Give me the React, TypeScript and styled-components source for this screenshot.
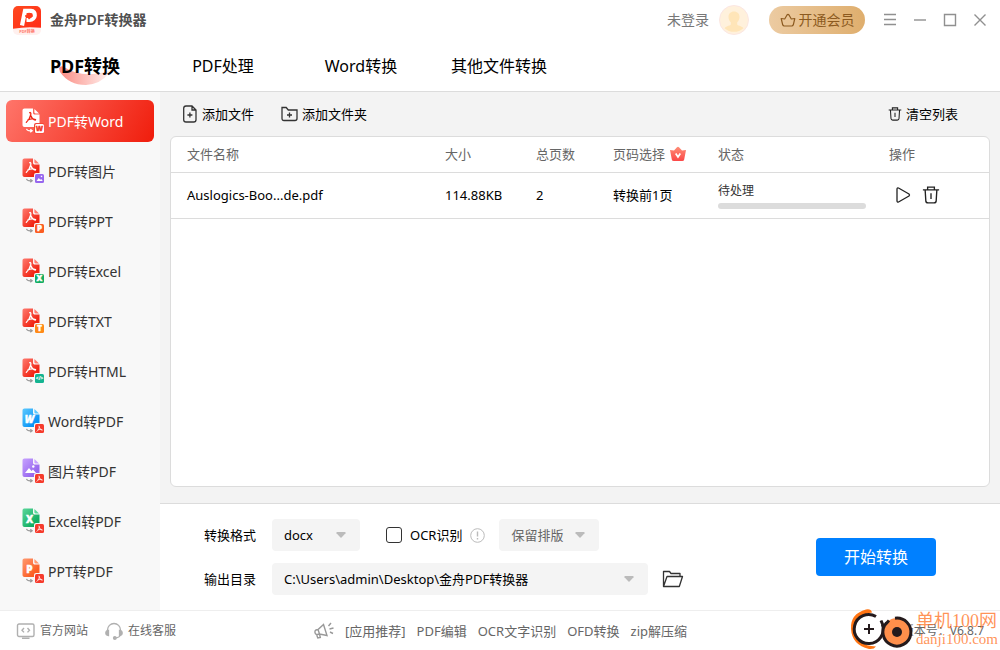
import React from 'react';
import styled, { createGlobalStyle, css } from 'styled-components';

const GlobalStyle = createGlobalStyle`
  *, *::before, *::after { box-sizing: border-box; }
  body {
    margin: 0;
    background: #fff;
    color: #000;
    font: 13px/20px 'Noto Sans', 'Noto Sans CJK SC', sans-serif;
  }
  button, select, input { font: inherit; color: inherit; }
  button { border: 0; padding: 0; background: none; cursor: pointer; }
  a { color: inherit; text-decoration: none; }
  svg { display: block; flex: none; }
`;

const Shell = styled.div`
  display: flex;
  flex-direction: column;
  min-height: 100vh;
`;

/* ---------- title bar ---------- */

const TitleBar = styled.header`
  display: flex;
  align-items: center;
  height: 40px;
  padding: 0 12px;
`;

const AppName = styled.h1`
  margin: 0 auto 0 8px;
  font-size: 14px;
  font-weight: 600;
  color: #505050;
`;

const LoginLink = styled.a`
  display: flex;
  align-items: center;
  gap: 10px;
  font-size: 14px;
  color: #777;
`;

const VipButton = styled.button`
  display: flex;
  align-items: center;
  justify-content: center;
  gap: 3px;
  width: 96px;
  height: 28px;
  margin: 0 17px 0 20px;
  border-radius: 14px;
  font-size: 14px;
  color: #8c5a20;
  background: linear-gradient(90deg, #eccba2, #dfae6d);
`;

const WindowControls = styled.div`
  display: flex;
  gap: 14px;
`;

const WindowButton = styled.button`
  width: 16px;
  height: 16px;
  color: #909090;
`;

/* ---------- tabs ---------- */

const Tabs = styled.nav`
  display: flex;
  height: 52px;
  padding: 0 16px;
  border-bottom: 1px solid #dcdcdc;
`;

const Tab = styled.button<{ $active?: boolean }>`
  position: relative;
  width: 138px;
  font-size: ${p => (p.$active ? 18 : 16)}px;
  font-weight: ${p => (p.$active ? 700 : 400)};
`;

const TabLabel = styled.span`
  position: relative;
`;

const Swoosh = styled.svg`
  position: absolute;
  left: 43px;
  top: 26px;
`;

/* ---------- body ---------- */

const Body = styled.div`
  display: flex;
  flex: 1;
`;

const Sidebar = styled.nav`
  display: flex;
  flex-direction: column;
  gap: 8px;
  width: 160px;
  padding: 8px 6px;
  background: #f8f8f8;
`;

const SideItem = styled.button<{ $active?: boolean }>`
  display: flex;
  align-items: center;
  gap: 4px;
  height: 42px;
  padding: 0 16px;
  border-radius: 6px;
  font-size: 14px;
  color: #333;
  ${p => p.$active && css`
    color: #fff;
    background: linear-gradient(120deg, #ff756a, #f01d0c);
  `}
`;

const SideLabel = styled.span`
  padding-top: 2px;
`;

const Main = styled.main`
  display: flex;
  flex: 1;
  flex-direction: column;
  min-width: 0;
`;

const FilePane = styled.section`
  display: flex;
  flex: 1;
  flex-direction: column;
  padding: 0 10px 16px;
  background: #f3f3f3;
  border-bottom: 1px solid #dcdcdc;
`;

const Toolbar = styled.div`
  display: flex;
  align-items: center;
  gap: 27px;
  height: 44px;
  padding: 0 32px 0 12px;
`;

const ToolButton = styled.button<{ $end?: boolean }>`
  display: flex;
  align-items: center;
  gap: 4px;
  margin-left: ${p => (p.$end ? 'auto' : '0')};
`;

const Card = styled.div`
  flex: 1;
  background: #fff;
  border: 1px solid #dcdcdc;
  border-radius: 6px;
`;

const FileTable = styled.table`
  width: 100%;
  table-layout: fixed;
  border-collapse: collapse;
`;

const HeadCell = styled.th<{ $width?: number }>`
  width: ${p => (p.$width ? `${p.$width}px` : 'auto')};
  height: 35px;
  padding: 0 0 0 16px;
  border-bottom: 1px solid #dcdcdc;
  font-weight: 400;
  text-align: left;
  color: #666;
`;

const Cell = styled.td`
  height: 46px;
  padding: 0 0 0 16px;
  border-bottom: 1px solid #dcdcdc;
`;

const WithIcon = styled.span`
  display: flex;
  align-items: center;
  gap: 4px;
`;

const Status = styled.div`
  font-size: 12px;
  line-height: 18px;
  color: #333;
`;

const Track = styled.div`
  width: 148px;
  height: 6px;
  margin-top: 3px;
  border-radius: 3px;
  background: #dcdcdc;
`;

const RowActions = styled.div`
  display: flex;
  align-items: center;
  gap: 11px;
  padding-left: 6px;
`;

/* ---------- settings ---------- */

const Settings = styled.section`
  display: flex;
  align-items: center;
  justify-content: space-between;
  height: 106px;
  padding: 0 64px 0 44px;
`;

const Fields = styled.div`
  display: flex;
  flex-direction: column;
  gap: 12px;
`;

const FieldRow = styled.div`
  display: flex;
  align-items: center;
  height: 32px;
`;

const FieldLabel = styled.label`
  width: 68px;
`;

const SelectBox = styled.div<{ $width: number; $muted?: boolean }>`
  display: grid;
  align-items: center;
  width: ${p => p.$width}px;
  height: 32px;
  border-radius: 4px;
  background: #f4f4f4;
  color: ${p => (p.$muted ? '#666' : '#000')};
  > * { grid-area: 1 / 1; }
  > svg { justify-self: end; margin-right: 14px; pointer-events: none; }
`;

const Select = styled.select`
  width: 100%;
  height: 32px;
  padding: 0 30px 0 12px;
  border: 0;
  background: none;
  appearance: none;
`;

const OcrLabel = styled.label`
  display: flex;
  align-items: center;
  gap: 8px;
  margin: 0 8px 0 26px;
`;

const Checkbox = styled.input`
  width: 16px;
  height: 16px;
  margin: 0;
  border: 1px solid #333;
  border-radius: 3px;
  background: #fff;
  appearance: none;
`;

const InfoButton = styled.button`
  margin-right: 14px;
`;

const FolderButton = styled.button`
  margin-left: 14px;
`;

const StartButton = styled.button`
  width: 120px;
  height: 38px;
  border-radius: 4px;
  font-size: 16px;
  color: #fff;
  background: #0080ff;
`;

/* ---------- footer ---------- */

const Footer = styled.footer`
  position: relative;
  display: flex;
  align-items: center;
  height: 40px;
  padding: 0 16px;
  border-top: 1px solid #eee;
  font-size: 12px;
  color: #666;
`;

const FooterLinks = styled.div`
  display: flex;
  align-items: center;
  gap: 17px;
`;

const FooterLink = styled.a`
  display: flex;
  align-items: center;
  gap: 5px;
`;

const Promo = styled.div`
  display: flex;
  align-items: center;
  gap: 11px;
  margin: 0 auto 0 138px;
  font-size: 13px;
`;

const SiteMark = styled.div`
  position: absolute;
  right: 2px;
  bottom: 0;
  display: flex;
  align-items: center;
  gap: 2px;
`;

const SiteMarkText = styled.div`
  font: 15px/15px 'Liberation Serif', 'Noto Sans CJK SC', serif;
  color: rgba(255, 112, 32, 0.75);
`;

const SiteMarkName = styled.div`
  font-size: 18px;
  line-height: 21px;
`;

/* ---------- icons ---------- */

const Acrobat = () => (
  <path
    d="M7.600 4.700c1.100-.7 1.500.600 1.100 2.200-.6 2.800-2 5.200-4.400 7.500M8.400 7c.8 2.400 2.200 4.200 4.900 5.200M6 11.800c2.200-1 4.800-1.300 7.600-.3"
    fill="none"
    stroke="currentColor"
    strokeWidth="1.300"
    strokeLinecap="round"
    strokeLinejoin="round"
  />
);

type Kind = 'pdf' | 'word' | 'image' | 'ppt' | 'excel' | 'txt' | 'html';

const docTones: Record<Kind, [string, string]> = {
  pdf: ['#ff7b70', '#f02413'],
  word: ['#5cc9ff', '#0a94f5'],
  image: ['#c7a2ff', '#9767ee'],
  ppt: ['#ff9a72', '#fb5d22'],
  excel: ['#5bd79b', '#12ad62'],
  txt: ['#ffb04a', '#ff8a17'],
  html: ['#3ed3b4', '#14b491'],
};

const letters: Partial<Record<Kind, string>> = { word: 'W', ppt: 'P', excel: 'X', txt: 'T', html: '</>' };

const ConvertIcon = ({ from, to, active }: { from: Kind; to: Kind; active?: boolean }) => {
  const id = `doc-${from}-${to}`;
  const badgeInk = active ? '#f23a2a' : '#fff';
  return (
    <svg width="22" height="26" viewBox="0 0 22 26" aria-hidden="true">
      <defs>
        <linearGradient id={id} x1="0" y1="0" x2="1" y2="1">
          <stop offset="0" stopColor={active ? '#fff' : docTones[from][0]} />
          <stop offset=".75" stopColor={active ? '#fff' : docTones[from][1]} />
        </linearGradient>
      </defs>
      <path d="M2.500.5H11v4.200c0 1 .8 1.800 1.800 1.800h4.700V17c0 1.200-.9 2-2 2h-13c-1.200 0-2-.8-2-2V2.500c0-1.200.8-2 2-2z" fill={`url(#${id})`} />
      <path d="M12.400.9l4.700 4.500h-3.500c-.7 0-1.200-.5-1.200-1.200z" fill={active ? '#fff' : docTones[from][0]} />
      <g color={active ? '#f02413' : '#fff'}>
        {from === 'pdf' && <Acrobat />}
        {from === 'image' && <><path d="M3 15l4-5 2.500 3 1.500-1.500 3 3.500z" fill="#fff" /><circle cx="11.300" cy="8.500" r="1.200" fill="#fff" /></>}
        {letters[from] && (
          <text x="7.500" y="15" textAnchor="middle" fontFamily="Open Sans" fontWeight="800" fontStyle={from === 'word' ? 'italic' : 'normal'} fontSize="10" fill="#fff" stroke="#fff" strokeWidth=".4">{letters[from]}</text>
        )}
      </g>
      <path d="M4.500 20.800c.4 1.700 2 2.200 4.800 2M8.300 21.200l2 1.600-2 1.400" fill="none" stroke={active ? '#fff' : '#999'} strokeWidth="1.100" />
      <rect x="12" y="15" width="10.500" height="10.500" rx="2" fill={active ? '#f54435' : '#f8f8f8'} />
      <rect x="13" y="16" width="9" height="9" rx="1.500" fill={active ? '#fff' : to === 'pdf' ? '#f63b2c' : docTones[to][1]} />
      {to === 'pdf' && <g color="#fff" transform="translate(12.500 15.300) scale(.56)"><Acrobat /></g>}
      {to === 'image' && <><path d="M14.500 23l2.300-3 1.500 1.700.9-.8 1.600 2.100z" fill="#fff" /><rect x="18.800" y="17.700" width="1.400" height="1.400" fill="#fff" /></>}
      {letters[to] && (
        <text x="17.500" y={to === 'html' ? 22.300 : 23.300} textAnchor="middle" fontFamily="Open Sans" fontWeight="800" fontSize={to === 'html' ? 5 : to === 'word' ? 7 : 8} fill={badgeInk} stroke={badgeInk} strokeWidth={to === 'html' ? 0 : 0.400}>{letters[to]}</text>
      )}
    </svg>
  );
};

const Logo = () => (
  <svg width="30" height="30" viewBox="0 0 30 30" aria-hidden="true">
    <defs>
      <linearGradient id="logo" x1="0" y1="0" x2="1" y2="1">
        <stop offset="0" stopColor="#ff4a20" /><stop offset="1" stopColor="#ff2b16" />
      </linearGradient>
      <clipPath id="logo-clip"><rect x="1" y="1" width="28" height="29" rx="5" /></clipPath>
    </defs>
    <g clipPath="url(#logo-clip)">
      <rect width="30" height="30" fill="#fff0ee" />
      <path d="M0 0h30v23Q15 21 0 24z" fill="url(#logo)" />
    </g>
    <path d="M10 20.500L13 5.800H19c5.500 0 5 9.200-1.500 9.200h-3" fill="none" stroke="#fff" strokeWidth="4.200" />
    <path d="M13 11h6.500M16.500 8l3.500 3-3.500 3" fill="none" stroke="#ff3b1d" strokeWidth="1.600" />
    <text x="15" y="28" textAnchor="middle" fontSize="4" fontWeight="700" fill="#ff7a6c">PDF转换</text>
  </svg>
);

const Avatar = () => (
  <svg width="30" height="30" viewBox="0 0 30 30" aria-hidden="true">
    <circle cx="15" cy="15" r="14.500" fill="#fff1dc" stroke="#fbe6e2" />
    <path d="M15 6.500c3.300 0 5.500 2.300 5.500 5.500 0 2.200-.9 4-2.300 5.200v2.300c0 1 4.300 1.200 6.200 3.700a14 14 0 01-18.800 0c1.900-2.500 6.200-2.700 6.200-3.700v-2.300C10.400 16 9.500 14.200 9.500 12c0-3.200 2.200-5.500 5.500-5.500z" fill="#ffe5b8" />
  </svg>
);

const Crown = () => (
  <svg width="16" height="14" viewBox="0 0 16 14" fill="none" stroke="currentColor" strokeWidth="1.200" strokeLinejoin="round" aria-hidden="true">
    <path d="M1.200 5.500l3.500.5 2.300-4q1-1.200 2 0l2.300 4 3.500-.5-1.500 6.300q-.4 1.200-1.600 1.200H4.300q-1.200 0-1.600-1.200z" />
  </svg>
);

const VipBadge = () => (
  <svg width="18" height="16" viewBox="0 0 18 16" aria-hidden="true">
    <defs><linearGradient id="vip" x1="0" y1="0" x2="0" y2="1"><stop offset="0" stopColor="#ff8d76" /><stop offset="1" stopColor="#fb4848" /></linearGradient></defs>
    <path d="M1 4l4 .5 3-3.300q1-.8 2 0l3 3.300 4-.5-1.800 9.500q-.2 1.500-2 1.500H4.800q-1.800 0-2-1.500z" fill="url(#vip)" />
    <path d="M6.700 7.500L9 11l2.300-3.500" fill="none" stroke="#fff" strokeWidth="1.700" />
  </svg>
);

const FileAdd = () => (
  <svg width="16" height="18" viewBox="0 0 16 18" fill="none" stroke="#333" strokeWidth="1.300" aria-hidden="true">
    <path d="M10 1H4Q1.700 1 1.700 3.300v11.400Q1.700 17 4 17h7.700q2.300 0 2.300-2.300V5zM10 1v4h4M7.900 7.500v5M5.400 10h5" />
  </svg>
);

const FolderAdd = () => (
  <svg width="17" height="16" viewBox="0 0 17 16" fill="none" stroke="#333" strokeWidth="1.300" aria-hidden="true">
    <path d="M1 1.500h4.200L7.300 4H16v8.500q0 2-2 2H3q-2 0-2-2zM8.500 6.500v5M6 9h5" />
  </svg>
);

const Trash = ({ size }: { size: number }) => (
  <svg width={size} height={size} viewBox="0 0 16 16" fill="none" stroke="#222" strokeWidth="1.200" aria-hidden="true">
    <path d="M.8 3.500h14.400M5 3.300V1h6v2.300M2.800 3.500l.6 9.700q.1 1.800 2 1.800h5.200q1.900 0 2-1.800l.6-9.700M8 6.500v5" />
  </svg>
);

const Play = () => (
  <svg width="16" height="18" viewBox="0 0 16 18" fill="none" stroke="#222" strokeWidth="1.300" strokeLinejoin="round" aria-hidden="true">
    <path d="M2 3v12q.2 1.500 1.500 1L14 10q1-1 0-2L3.500 2Q2.200 1.500 2 3z" />
  </svg>
);

const Caret = () => (
  <svg width="10" height="6" viewBox="0 0 10 6" aria-hidden="true"><path d="M1 0h8q1 .5.500 1.300L5.500 5.500q-.5.400-1 0L.5 1.300Q0 .5 1 0z" fill="#bbb" /></svg>
);

const Info = () => (
  <svg width="15" height="15" viewBox="0 0 15 15" fill="none" stroke="#bbb" aria-hidden="true">
    <circle cx="7.500" cy="7.500" r="6.800" /><path d="M7.500 3.500v5M7.500 10v1.500" strokeWidth="1.400" />
  </svg>
);

const OpenFolder = () => (
  <svg width="22" height="18" viewBox="0 0 22 18" fill="none" stroke="#333" strokeWidth="1.300" strokeLinejoin="round" aria-hidden="true">
    <path d="M1.500 16.500V1.500h6l1.500 2h9V6M1.500 16.500L5 6.500h15.500l-3.200 10z" />
  </svg>
);

const Monitor = () => (
  <svg width="19" height="16" viewBox="0 0 19 16" fill="none" stroke="#b0b0b0" strokeWidth="1.400" aria-hidden="true">
    <rect x="1.500" y="1" width="16.500" height="12.500" rx="1.500" /><path d="M6 15.300h7.500M8 5L6 7.200l2 2.200M11.500 5l2 2.200-2 2.200" />
  </svg>
);

const Headset = () => (
  <svg width="18" height="18" viewBox="0 0 18 18" fill="none" stroke="#b0b0b0" strokeWidth="1.300" aria-hidden="true">
    <path d="M2.500 9V8a6.500 6.500 0 0113 0v1M15.500 12.500q-.5 3-5 3.500" />
    <path d="M3.500 8.500v5q-2.700-.3-2.700-2.500t2.700-2.500zM14.500 8.500v5q2.700-.3 2.700-2.500t-2.700-2.500z" fill="#b0b0b0" />
    <circle cx="9.800" cy="16" r="1.300" fill="#b0b0b0" />
  </svg>
);

const Megaphone = () => (
  <svg width="20" height="17" viewBox="0 0 20 17" fill="none" stroke="#999" strokeWidth="1.400" aria-hidden="true">
    <path d="M1 9q-.5 3.500 2.500 3.500l2-.5 7.500 1.500L9.500 2.500 4 7.500 2 8zM5.500 12l.8 3.500-2.500.5-1.300-3.500M4 7.500l1.500 4.500M14.500 4L17 1M15.500 7l4-1M16 10l3 1.500" />
  </svg>
);

const SiteLogo = () => (
  <svg width="64" height="42" viewBox="0 0 64 42" fill="none" aria-hidden="true">
    <path d="M16 1.500Q0 6 1 21q1 16 18 20 5 .5 7-2.500Q6 38 5 21 5 7 22 4.500q-1-4-6-3z" fill="#ff7412" />
    <circle cx="19" cy="21" r="14.500" fill="#fff" />
    <path d="M26 8.500a14.500 14.500 0 106.500 8" stroke="#241a1c" strokeWidth="3" />
    <path d="M19 16v10M14 21h10" stroke="#241a1c" strokeWidth="2" />
    <circle cx="47" cy="24" r="14" fill="#ff8f4b" />
    <path d="M45 10.200a14 14 0 11-8.500 4.500M31 12.500l2.500 6 5.500-6" stroke="#241a1c" strokeWidth="3" />
    <circle cx="47" cy="24" r="5" fill="#241a1c" />
  </svg>
);

const ControlIcon = ({ d }: { d: string }) => (
  <svg width="16" height="16" viewBox="0 0 16 16" fill="none" stroke="currentColor" strokeWidth="1.400" aria-hidden="true"><path d={d} /></svg>
);

/* ---------- data ---------- */

const controls = [
  { label: '菜单', d: 'M2 2.500h12M2 7.500h12M2 12.500h12' },
  { label: '最小化', d: 'M2 8h12' },
  { label: '最大化', d: 'M2.500 2.500h11v11h-11z' },
  { label: '关闭', d: 'M2.500 2.500l11 11M13.500 2.500l-11 11' },
];

const tabs = ['PDF转换', 'PDF处理', 'Word转换', '其他文件转换'];

const converters: { label: string; from: Kind; to: Kind }[] = [
  { label: 'PDF转Word', from: 'pdf', to: 'word' },
  { label: 'PDF转图片', from: 'pdf', to: 'image' },
  { label: 'PDF转PPT', from: 'pdf', to: 'ppt' },
  { label: 'PDF转Excel', from: 'pdf', to: 'excel' },
  { label: 'PDF转TXT', from: 'pdf', to: 'txt' },
  { label: 'PDF转HTML', from: 'pdf', to: 'html' },
  { label: 'Word转PDF', from: 'word', to: 'pdf' },
  { label: '图片转PDF', from: 'image', to: 'pdf' },
  { label: 'Excel转PDF', from: 'excel', to: 'pdf' },
  { label: 'PPT转PDF', from: 'ppt', to: 'pdf' },
];

const promos = ['[应用推荐]', 'PDF编辑', 'OCR文字识别', 'OFD转换', 'zip解压缩'];

export default function App() {
  return (
    <Shell>
      <GlobalStyle />
      <TitleBar>
        <Logo />
        <AppName>金舟PDF转换器</AppName>
        <LoginLink href="#login">未登录<Avatar /></LoginLink>
        <VipButton><Crown />开通会员</VipButton>
        <WindowControls>
          {controls.map(c => (
            <WindowButton key={c.label} aria-label={c.label}><ControlIcon d={c.d} /></WindowButton>
          ))}
        </WindowControls>
      </TitleBar>

      <Tabs>
        {tabs.map((label, i) => (
          <Tab key={label} $active={i === 0}>
            {i === 0 && (
              <Swoosh width="52" height="20" viewBox="0 0 52 20" aria-hidden="true">
                <defs><linearGradient id="swoosh"><stop offset="0" stopColor="#fb8b82" /><stop offset="1" stopColor="#fff0ee" /></linearGradient></defs>
                <path d="M0 2q2-3 5-1 18 12 44 4 2 0 1 2-8 11-23 12Q10 19 1 6z" fill="url(#swoosh)" />
              </Swoosh>
            )}
            <TabLabel>{label}</TabLabel>
          </Tab>
        ))}
      </Tabs>

      <Body>
        <Sidebar>
          {converters.map((c, i) => (
            <SideItem key={c.label} $active={i === 0}>
              <ConvertIcon from={c.from} to={c.to} active={i === 0} />
              <SideLabel>{c.label}</SideLabel>
            </SideItem>
          ))}
        </Sidebar>

        <Main>
          <FilePane>
            <Toolbar>
              <ToolButton><FileAdd />添加文件</ToolButton>
              <ToolButton><FolderAdd />添加文件夹</ToolButton>
              <ToolButton $end><Trash size={14} />清空列表</ToolButton>
            </Toolbar>
            <Card>
              <FileTable>
                <thead>
                  <tr>
                    <HeadCell>文件名称</HeadCell>
                    <HeadCell $width={91}>大小</HeadCell>
                    <HeadCell $width={77}>总页数</HeadCell>
                    <HeadCell $width={105}><WithIcon>页码选择<VipBadge /></WithIcon></HeadCell>
                    <HeadCell $width={171}>状态</HeadCell>
                    <HeadCell $width={116}>操作</HeadCell>
                  </tr>
                </thead>
                <tbody>
                  <tr>
                    <Cell>Auslogics-Boo...de.pdf</Cell>
                    <Cell>114.88KB</Cell>
                    <Cell>2</Cell>
                    <Cell>转换前1页</Cell>
                    <Cell><Status>待处理</Status><Track /></Cell>
                    <Cell>
                      <RowActions>
                        <button aria-label="开始"><Play /></button>
                        <button aria-label="删除"><Trash size={18} /></button>
                      </RowActions>
                    </Cell>
                  </tr>
                </tbody>
              </FileTable>
            </Card>
          </FilePane>

          <Settings>
            <Fields>
              <FieldRow>
                <FieldLabel htmlFor="format">转换格式</FieldLabel>
                <SelectBox $width={88}>
                  <Select id="format"><option>docx</option></Select><Caret />
                </SelectBox>
                <OcrLabel><Checkbox type="checkbox" />OCR识别</OcrLabel>
                <InfoButton aria-label="说明"><Info /></InfoButton>
                <SelectBox $width={100} $muted>
                  <Select aria-label="排版"><option>保留排版</option></Select><Caret />
                </SelectBox>
              </FieldRow>
              <FieldRow>
                <FieldLabel htmlFor="output">输出目录</FieldLabel>
                <SelectBox $width={376}>
                  <Select id="output"><option>C:\Users\admin\Desktop\金舟PDF转换器</option></Select><Caret />
                </SelectBox>
                <FolderButton aria-label="打开目录"><OpenFolder /></FolderButton>
              </FieldRow>
            </Fields>
            <StartButton>开始转换</StartButton>
          </Settings>
        </Main>
      </Body>

      <Footer>
        <FooterLinks>
          <FooterLink href="#site"><Monitor />官方网站</FooterLink>
          <FooterLink href="#support"><Headset />在线客服</FooterLink>
        </FooterLinks>
        <Promo>
          <Megaphone />
          {promos.map(p => <a key={p} href="#promo">{p}</a>)}
        </Promo>
        <span>版本号：V6.8.7</span>
        <SiteMark>
          <SiteLogo />
          <SiteMarkText><SiteMarkName>单机100网</SiteMarkName>danji100.com</SiteMarkText>
        </SiteMark>
      </Footer>
    </Shell>
  );
}
